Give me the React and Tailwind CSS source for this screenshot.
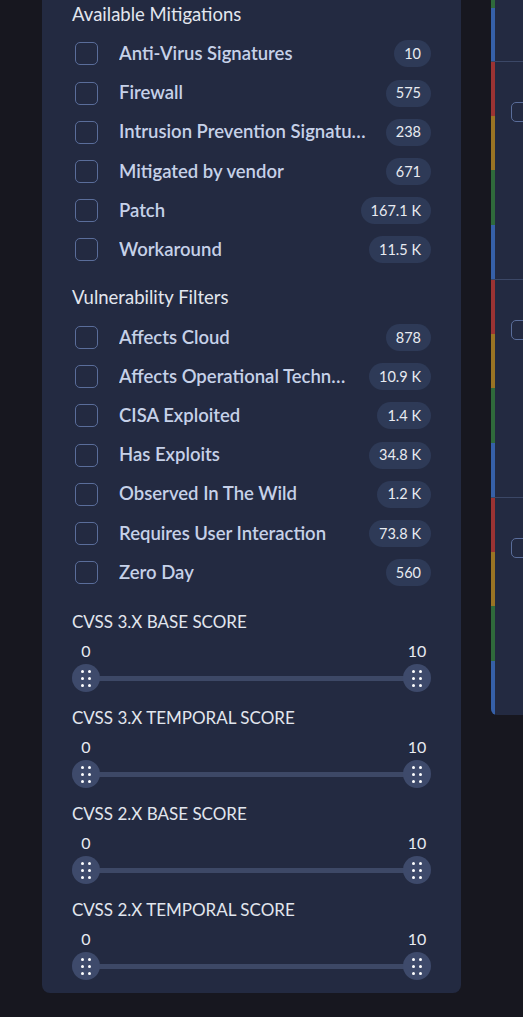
const mitigations = [
  { label: 'Anti-Virus Signatures', count: '10' },
  { label: 'Firewall', count: '575' },
  { label: 'Intrusion Prevention Signatures', count: '238' },
  { label: 'Mitigated by vendor', count: '671' },
  { label: 'Patch', count: '167.1 K' },
  { label: 'Workaround', count: '11.5 K' },
]

const vulnFilters = [
  { label: 'Affects Cloud', count: '878' },
  { label: 'Affects Operational Technology', count: '10.9 K' },
  { label: 'CISA Exploited', count: '1.4 K' },
  { label: 'Has Exploits', count: '34.8 K' },
  { label: 'Observed In The Wild', count: '1.2 K' },
  { label: 'Requires User Interaction', count: '73.8 K' },
  { label: 'Zero Day', count: '560' },
]

const scores = ['CVSS 3.X BASE SCORE', 'CVSS 3.X TEMPORAL SCORE', 'CVSS 2.X BASE SCORE', 'CVSS 2.X TEMPORAL SCORE']

function FilterRow({ label, count }) {
  return (
    <label className="flex items-center h-[39.2px] pl-[3px] cursor-pointer">
      <span className="flex-shrink-0 w-[23px] h-[23px] rounded-[5px] border-[1.5px] border-[#5a6d9a]" />
      <span className="ml-[21px] flex-1 min-w-0 truncate text-[18.5px] font-semibold text-[#c6d1e8]">{label}</span>
      <span className="ml-5 flex-shrink-0 h-[27px] px-[10px] rounded-full bg-[#2e3a57] text-[14.5px] text-[#e8ebf1] flex items-center">
        {count}
      </span>
    </label>
  )
}

function Thumb() {
  return (
    <div className="w-7 h-7 rounded-full bg-[#3e4a6b] flex items-center justify-center">
      <div className="grid grid-cols-2 gap-x-[4px] gap-y-[4px]">
        {[0, 1, 2, 3, 4, 5].map((i) => (
          <span key={i} className="block w-[3px] h-[3px] rounded-full bg-white" />
        ))}
      </div>
    </div>
  )
}

function ScoreSlider({ title }) {
  return (
    <div className="mb-[13px] last:mb-0">
      <div className="h-6 flex items-center text-[17px] text-[#e2e6ee]">{title}</div>
      <div className="mt-2 h-5 flex items-center justify-between text-[16px] text-[#e8ebf1]">
        <span className="w-7 text-center">0</span>
        <span className="w-7 text-center">10</span>
      </div>
      <div className="mt-[3px] relative h-7 flex items-center justify-between">
        <div className="absolute left-3 right-3 top-[11.5px] h-[5px] bg-[#3d4866]" />
        <div className="relative"><Thumb /></div>
        <div className="relative"><Thumb /></div>
      </div>
    </div>
  )
}

function StripRow({ segments }) {
  return (
    <div className="flex border-t border-[#3b4766]">
      <div className="w-1 flex flex-col">
        {segments.map(([color, h], i) => (
          <div key={i} className={`${color} ${h}`} />
        ))}
      </div>
      <div className="flex-1 pl-4 pt-[40px]">
        <span className="block w-5 h-5 rounded-[5px] border-[1.5px] border-[#5a6d9a]" />
      </div>
    </div>
  )
}

export default function App() {
  const fullRow = [
    ['bg-[#9b3333]', 'h-[54px]'],
    ['bg-[#9a7424]', 'h-[54px]'],
    ['bg-[#2f6a3b]', 'h-[55px]'],
    ['bg-[#3660a8]', 'h-[54px]'],
  ]

  return (
    <div className="w-[523px] h-[1017px] overflow-hidden bg-[#17171f] flex items-start" style={{ fontFamily: 'Lato, "Noto Sans", sans-serif' }}>
      <div className="ml-[42px] w-[419px] flex-shrink-0 bg-[#232a41] rounded-b-lg px-[30px] pt-[2.4px] pb-[13px]">
        <div className="h-6 flex items-center text-[18.5px] text-[#e2e6ee]">Available Mitigations</div>
        <div className="mt-2">
          {mitigations.map((m) => (
            <FilterRow key={m.label} {...m} />
          ))}
        </div>
        <div className="mt-[16.4px] h-6 flex items-center text-[18.5px] text-[#e2e6ee]">Vulnerability Filters</div>
        <div className="mt-2">
          {vulnFilters.map((m) => (
            <FilterRow key={m.label} {...m} />
          ))}
        </div>
        <div className="mt-[17.2px]">
          {scores.map((s) => (
            <ScoreSlider key={s} title={s} />
          ))}
        </div>
      </div>

      <div className="ml-[30px] w-[200px] flex-shrink-0 bg-[#232a41] rounded-bl-md overflow-hidden">
        <div className="flex h-[61px]">
          <div className="w-1 flex flex-col">
            <div className="bg-[#2f6a3b] h-[8px]" />
            <div className="bg-[#3660a8] flex-1" />
          </div>
        </div>
        <StripRow segments={fullRow} />
        <StripRow segments={fullRow} />
        <StripRow segments={fullRow} />
      </div>
    </div>
  )
}
